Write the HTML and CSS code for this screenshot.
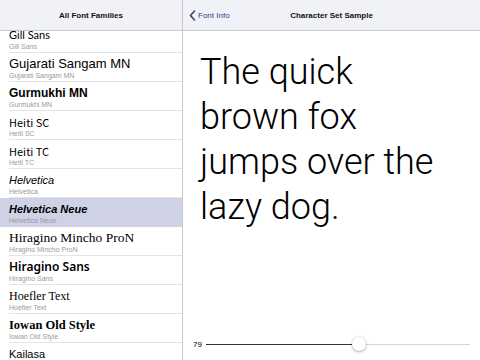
FILE: index.html
```html
<!DOCTYPE html>
<html>
<head>
    <title>Font Families</title>
    <link rel="stylesheet" href="styles.css">
</head>
<body>
    <div class="app">
        <div class="sidebar">
            <div class="bar">
                <span class="bar-title">All Font Families</span>
            </div>
            <div class="list">
                <ul class="fonts">
                    <li class="font-row"><span class="name f-gill">Gill Sans</span><span class="sub">Gill Sans</span></li>
                    <li class="font-row"><span class="name f-gujarati">Gujarati Sangam MN</span><span class="sub">Gujarati Sangam MN</span></li>
                    <li class="font-row"><span class="name f-gurmukhi">Gurmukhi MN</span><span class="sub">Gurmukhi MN</span></li>
                    <li class="font-row"><span class="name f-heiti">Heiti SC</span><span class="sub">Heiti SC</span></li>
                    <li class="font-row"><span class="name f-heiti">Heiti TC</span><span class="sub">Heiti TC</span></li>
                    <li class="font-row"><span class="name f-helvetica">Helvetica</span><span class="sub">Helvetica</span></li>
                    <li class="font-row selected"><span class="name f-neue">Helvetica Neue</span><span class="sub">Helvetica Neue</span></li>
                    <li class="font-row"><span class="name f-mincho">Hiragino Mincho ProN</span><span class="sub">Hiragino Mincho ProN</span></li>
                    <li class="font-row"><span class="name f-hiragino">Hiragino Sans</span><span class="sub">Hiragino Sans</span></li>
                    <li class="font-row"><span class="name f-hoefler">Hoefler Text</span><span class="sub">Hoefler Text</span></li>
                    <li class="font-row"><span class="name f-iowan">Iowan Old Style</span><span class="sub">Iowan Old Style</span></li>
                    <li class="font-row"><span class="name f-kailasa">Kailasa</span><span class="sub">Kailasa</span></li>
                </ul>
            </div>
        </div>
        <div class="detail">
            <div class="bar">
                <a class="back" href="#">
                    <svg width="7" height="11" viewBox="0 0 7 11"><path d="M5.5 1 L1.5 5.5 L5.5 10" fill="none" stroke="#3b3d80" stroke-width="1.6" stroke-linecap="round" stroke-linejoin="round"/></svg>
                    Font Info
                </a>
                <span class="bar-title">Character Set Sample</span>
            </div>
            <div class="sample">The quick brown fox jumps over the lazy dog.</div>
            <div class="slider">
                <span class="size">79</span>
                <div class="track">
                    <div class="fill" style="width: 58%"></div>
                    <div class="thumb" style="left: 58%"></div>
                </div>
            </div>
        </div>
    </div>
</body>
</html>
```

FILE: styles.css
```css
body {
    margin: 0;
    padding: 0;
    font-family: "Liberation Sans", Arial, sans-serif;
    color: #000;
    background: #fff;
}
.app {
    display: flex;
    width: 480px;
    height: 360px;
    overflow: hidden;
}
.sidebar {
    width: 182px;
    border-right: 1px solid #c8c8cc;
    display: flex;
    flex-direction: column;
}
.detail {
    flex: 1;
    display: flex;
    flex-direction: column;
    position: relative;
}
.bar {
    height: 30px;
    flex: none;
    background: #f1f2f8;
    border-bottom: 1px solid #c9cad0;
    display: flex;
    align-items: center;
    justify-content: center;
    position: relative;
}
.bar-title {
    font-size: 8px;
    font-weight: bold;
    color: #111;
}
.back {
    position: absolute;
    left: 6px;
    top: 0;
    bottom: 0;
    display: flex;
    align-items: center;
    gap: 2px;
    font-size: 8px;
    color: #3b3d80;
    text-decoration: none;
}
.list {
    flex: 1;
    overflow: hidden;
}
.fonts {
    list-style: none;
    margin: -7px 0 0 0;
    padding: 0;
}
.font-row {
    height: 29px;
    box-sizing: border-box;
    padding: 4px 0 0 9px;
    display: flex;
    flex-direction: column;
    position: relative;
}
.font-row::after {
    content: "";
    position: absolute;
    left: 9px;
    right: 0;
    bottom: 0;
    height: 1px;
    background: #e4e4e8;
}
.font-row.selected {
    background: #cfd1e5;
}
.font-row.selected::after {
    display: none;
}
.name {
    font-size: 12px;
    line-height: 14px;
    white-space: nowrap;
}
.sub {
    font-size: 7px;
    line-height: 10px;
    color: #9a9aa0;
}
.f-gill { font-family: Lato, sans-serif; font-size: 11px; }
.f-gujarati { font-family: "Liberation Sans", sans-serif; font-size: 13px; }
.f-gurmukhi { font-family: "Liberation Sans", sans-serif; font-weight: bold; }
.f-heiti { font-family: "Noto Sans CJK SC", sans-serif; font-size: 11px; }
.f-helvetica { font-family: "Liberation Sans", sans-serif; font-style: italic; font-size: 11px; }
.f-neue { font-family: "Liberation Sans", sans-serif; font-style: italic; font-weight: bold; font-size: 11px; }
.f-mincho { font-family: "Liberation Serif", serif; font-size: 13.5px; }
.f-hiragino { font-family: "Noto Sans", sans-serif; font-weight: 600; }
.f-hoefler { font-family: "Liberation Serif", serif; font-size: 12px; }
.f-iowan { font-family: "Liberation Serif", serif; font-weight: bold; font-size: 12.5px; }
.f-kailasa { font-family: "Liberation Sans", sans-serif; font-size: 11px; }
.sample {
    flex: 1;
    width: 245px;
    padding: 19px 0 0 17px;
    font-size: 36px;
    line-height: 45px;
    font-weight: 300;
    font-family: Roboto, "Liberation Sans", sans-serif;
}
.slider {
    display: flex;
    align-items: center;
    height: 28px;
    padding: 0 10px 0 10px;
    margin-bottom: 2px;
}
.size {
    font-size: 8px;
    width: 13px;
}
.track {
    flex: 1;
    height: 1px;
    background: #d6d6da;
    position: relative;
}
.fill {
    height: 1px;
    background: #333;
}
.thumb {
    position: absolute;
    top: -7px;
    width: 14px;
    height: 14px;
    margin-left: -7px;
    border-radius: 50%;
    background: #fff;
    box-shadow: 0 1px 3px rgba(0, 0, 0, 0.3), 0 0 0 0.5px rgba(0, 0, 0, 0.08);
}
```
